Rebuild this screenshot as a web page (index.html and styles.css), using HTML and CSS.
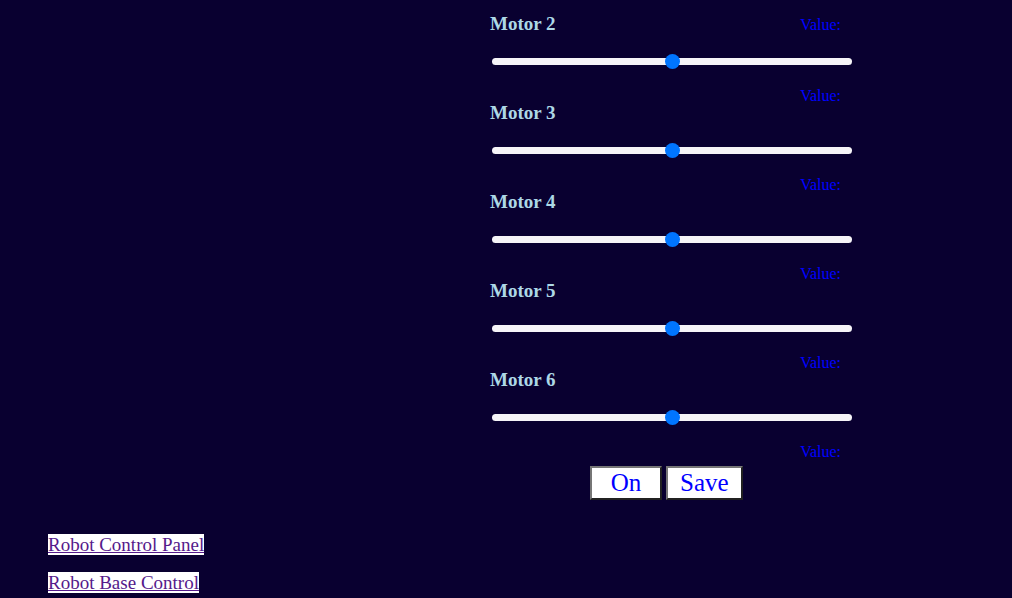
FILE: index.html
```html
<!DOCTYPE html>
<html lang="en">
<head>
<meta charset="utf-8">
<title>Robot Arm Control</title>
<link rel="stylesheet" href="styles.css">
</head>
<body>
<main class="panel">
  <section class="motor">
    <div class="motor-head">
      <label class="motor-name" for="motor2">Motor 2</label>
      <span class="value">Value:</span>
    </div>
    <input class="slider" id="motor2" type="range" min="0" max="180" value="90">
    <p class="value">Value:</p>
  </section>
  <section class="motor">
    <div class="motor-head">
      <label class="motor-name" for="motor3">Motor 3</label>
    </div>
    <input class="slider" id="motor3" type="range" min="0" max="180" value="90">
    <p class="value">Value:</p>
  </section>
  <section class="motor">
    <div class="motor-head">
      <label class="motor-name" for="motor4">Motor 4</label>
    </div>
    <input class="slider" id="motor4" type="range" min="0" max="180" value="90">
    <p class="value">Value:</p>
  </section>
  <section class="motor">
    <div class="motor-head">
      <label class="motor-name" for="motor5">Motor 5</label>
    </div>
    <input class="slider" id="motor5" type="range" min="0" max="180" value="90">
    <p class="value">Value:</p>
  </section>
  <section class="motor">
    <div class="motor-head">
      <label class="motor-name" for="motor6">Motor 6</label>
    </div>
    <input class="slider" id="motor6" type="range" min="0" max="180" value="90">
    <p class="value">Value:</p>
  </section>
  <div class="actions">
    <button class="action" type="button">On</button>
    <button class="action action-save" type="button">Save</button>
  </div>
</main>
<nav class="links">
  <a class="link" href="#control-panel">Robot Control Panel</a>
  <a class="link" href="#base-control">Robot Base Control</a>
</nav>
</body>
</html>
```
FILE: styles.css
```css
body {
  margin: 0;
  padding: 14px 48px 0;
  background: #090030;
  font-family: "Liberation Serif", "Times New Roman", serif;
}

.panel {
  max-width: 364px;
  margin-left: 442px;
}

.motor {
  display: flex;
  flex-direction: column;
  gap: 19px;
}

.motor-head {
  display: flex;
  align-items: center;
  justify-content: space-between;
}

.motor-name {
  color: lightblue;
  font-size: 19px;
  font-weight: bold;
  line-height: 20px;
}

.value {
  margin: 0;
  padding-right: 13px;
  color: #0000ff;
  font-size: 16px;
  line-height: 15px;
  text-align: right;
}

.slider {
  appearance: none;
  height: 16px;
  margin: 0 2px;
  background: transparent;
}

.slider::-webkit-slider-runnable-track {
  height: 7px;
  border-radius: 4px;
  background: #f6f4f8;
}

.slider::-webkit-slider-thumb {
  appearance: none;
  width: 15px;
  height: 15px;
  margin-top: -4px;
  border-radius: 50%;
  background: #0075ff;
}

.actions {
  display: flex;
  gap: 4px;
  margin: 7px 0 0 100px;
}

.action {
  min-width: 72px;
  padding: 0 12px;
  border: 2px outset #767676;
  background: #ffffff;
  color: #0000ff;
  font-family: inherit;
  font-size: 25px;
  line-height: 30px;
}

.links {
  display: flex;
  flex-direction: column;
  align-items: flex-start;
  gap: 17px;
  margin-top: 34px;
}

.link {
  background: #ffffff;
  color: #551a8b;
  font-size: 19px;
  line-height: 21px;
}
```
